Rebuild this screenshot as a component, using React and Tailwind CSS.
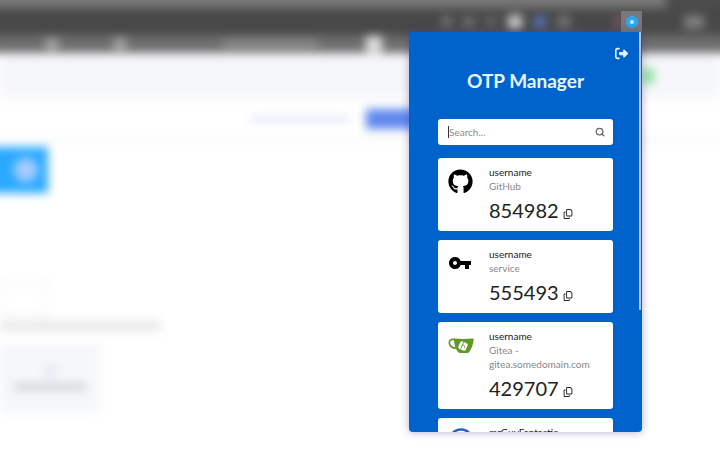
import { useState } from 'react'
import { Search } from 'lucide-react'
import { FaGithub } from 'react-icons/fa'
import { FaRegCopy, FaRightFromBracket } from 'react-icons/fa6'
import { MdVpnKey } from 'react-icons/md'

function GiteaLogo() {
  return (
    <svg viewBox="0 0 26 17" className="h-[17px] w-[26px]" aria-hidden="true">
      <path d="M7 2.600C3.500 1.800 1.200 3 1.300 5.600c.2 3.400 3 5.400 7.400 5.600" fill="none" stroke="#609926" strokeWidth="1.700" />
      <path d="M6 1.400c6 .7 12.500.6 18.600 0 .9 0 1.200.6 1.100 1.400-.5 4.700-2 8.900-4.300 12-.7.9-1.500 1.300-2.600 1.300h-6.300c-1.200 0-2.200-.6-2.900-1.500C7.500 11.800 6 7 6 1.400z" fill="#609926" />
      <rect x="11" y="5" width="8" height="8" rx="1.800" transform="rotate(25 15 9)" fill="#fff" />
      <path d="M15.600 5l-2.600 6.600M14.500 8c2.800.3 2.800 1.500 2 3.400" fill="none" stroke="#609926" strokeWidth="0.9" />
    </svg>
  )
}

function RingLogo() {
  return (
    <svg viewBox="0 0 26 26" className="size-[26px]" fill="none" stroke="#2b5fc4" strokeWidth="2.500" aria-hidden="true">
      <circle cx="13" cy="13" r="11.500" />
    </svg>
  )
}

const accounts = [
  { id: 1, user: 'username', service: 'GitHub', code: '854982', icon: <FaGithub className="size-[25px]" /> },
  { id: 2, user: 'username', service: 'service', code: '555493', icon: <MdVpnKey className="size-6" /> },
  { id: 3, user: 'username', service: 'Gitea - gitea.somedomain.com', code: '429707', icon: <GiteaLogo /> },
  { id: 4, user: 'mrGuyFantastic', icon: <RingLogo /> },
]

function AccountCard({ account }) {
  return (
    <li className="flex min-h-[73px] rounded-[3px] bg-white px-2.5 py-[7px]">
      <div className="flex w-[41px] shrink-0 pt-[3px] text-black">
        <div className="flex h-[26px] w-[26px] items-center">{account.icon}</div>
      </div>
      <div className="min-w-0">
        <p className="text-[10px] leading-[14px] text-[#222]">{account.user}</p>
        {account.service && <p className="text-[10px] leading-[14px] text-[#888]">{account.service}</p>}
        {account.code && (
          <p className="mt-1 flex items-end gap-1 text-[20px] leading-[27px] text-[#222]">
            {account.code}
            <button type="button" aria-label="Copy code" className="mb-[5px] text-[10px]">
              <FaRegCopy />
            </button>
          </p>
        )}
      </div>
    </li>
  )
}

function Popup() {
  const [query, setQuery] = useState('')
  const shown = accounts.filter(a => `${a.user} ${a.service}`.toLowerCase().includes(query.toLowerCase()))

  return (
    <main className="absolute top-8 right-[78px] h-[400px] w-[233px] overflow-hidden rounded-b-[4px] bg-[#0063cc] shadow-[0_0_8px_rgba(40,50,140,0.4)]">
      <div className="flex justify-end px-3.5 pt-[15px]">
        <button type="button" aria-label="Sign out" className="text-[13px] text-[#e4f4ff]">
          <FaRightFromBracket />
        </button>
      </div>
      <h1 className="mt-[9px] text-center text-[19px] leading-6 font-bold text-[#e8f6ff]">OTP Manager</h1>
      <div className="px-[29px] pt-[26px]">
        <label className="flex h-[26px] items-center rounded-[3px] bg-white pr-2 pl-2.5">
          <span className="h-3 w-px shrink-0 bg-[#333]" />
          <input
            value={query}
            onChange={e => setQuery(e.target.value)}
            aria-label="Search"
            placeholder="Search..."
            className="min-w-0 flex-1 text-[10px] text-[#444] outline-none placeholder:text-[#8a8a8a]"
          />
          <Search className="size-2.5 text-[#666]" strokeWidth={3} />
        </label>
        <ul className="mt-[13px] flex flex-col gap-[9px]">
          {shown.map(a => (
            <AccountCard key={a.id} account={a} />
          ))}
        </ul>
      </div>
      <div className="absolute top-0 right-px h-[278px] w-0.5 bg-[#b4c4dc]" />
    </main>
  )
}

function Backdrop() {
  return (
    <div className="blur-[5px]" aria-hidden="true">
      <div className="-mx-4 -mt-4 flex h-6 justify-end bg-[#787878]">
        <div className="w-[70px] bg-[#4c4c4c]" />
      </div>
      <div className="-mx-4 flex h-[27px] items-center justify-end gap-3 bg-[#484848] pr-8">
        <div className="size-2.5 bg-[#777]" />
        <div className="size-2.5 bg-[#777]" />
        <div className="size-2.5 bg-[#666]" />
        <div className="size-3.5 bg-[#ccc]" />
        <div className="size-3 bg-[#5870b8]" />
        <div className="size-3 bg-[#777]" />
        <div className="mr-12 ml-8 size-2.5 bg-[#805560]" />
        <div className="h-3 w-5 bg-[#858585]" />
      </div>
      <div className="-mx-4 flex h-[18px] items-center gap-14 bg-[#6e6e6e] pl-[62px]">
        <div className="size-3 bg-[#a8a8a8]" />
        <div className="size-3 bg-[#a8a8a8]" />
        <div className="ml-10 h-2 w-24 bg-[#8c8c8c]" />
        <div className="-ml-2 size-4 bg-[#e0e0e0]" />
      </div>
      <div className="flex h-[46px] items-center justify-end bg-[#f6f7fa] pr-[66px]">
        <div className="h-4 w-3 bg-[#8fe09c]" />
      </div>
      <div className="flex h-[42px] items-center justify-end gap-4 border-b-2 border-[#eee] pr-[290px]">
        <div className="h-1.5 w-[100px] bg-[#e2e7fb]" />
        <div className="h-5 w-16 bg-[#5f88ee]" />
      </div>
      <div className="-ml-4 flex h-[52px] items-end">
        <div className="flex h-[46px] w-16 items-center justify-end bg-[#2ba9ff] pr-2.5">
          <div className="size-6 rounded-full bg-[#a6ccff]" />
        </div>
      </div>
      <div className="mt-[88px] h-9 w-12 border-2 border-[#f0f0f0]" />
      <div className="mt-1 h-2.5 w-40 bg-[#e8e8ea]" />
      <div className="mt-3 flex h-[70px] w-[100px] flex-col items-center justify-center gap-1.5 bg-[#f5f7fa]">
        <div className="size-3 bg-[#e6e9f5]" />
        <div className="h-2 w-[72px] bg-[#d4d6da]" />
      </div>
    </div>
  )
}

export default function App() {
  return (
    <div className="relative min-h-screen overflow-hidden bg-white font-['Lato',sans-serif]">
      <Backdrop />
      <div className="absolute top-[11px] right-[78px] flex h-[21px] w-[21px] items-center justify-center bg-[#75797d]">
        <div className="flex size-3 items-center justify-center rounded-full bg-[#27a9f5]">
          <div className="size-1 rounded-xs bg-[#c5eaff]" />
        </div>
      </div>
      <Popup />
    </div>
  )
}
